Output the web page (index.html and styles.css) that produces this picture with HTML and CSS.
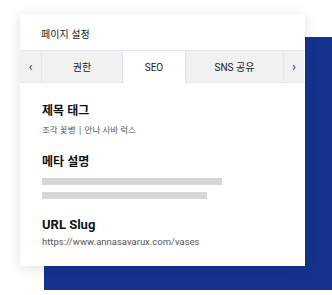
FILE: index.html
```html
<!DOCTYPE html>
<html lang="ko">
<head>
    <meta charset="UTF-8">
    <meta name="viewport" content="width=device-width, initial-scale=1.0">
    <title>페이지 설정</title>
    <link rel="stylesheet" href="styles.css">
</head>
<body>
    <div class="stage">
        <div class="backdrop"></div>

        <div class="settings-card">
            <div class="card-header">페이지 설정</div>

            <div class="tabs">
                <button class="tab-arrow">&#8249;</button>
                <button class="tab">권한</button>
                <button class="tab active">SEO</button>
                <button class="tab">SNS 공유</button>
                <button class="tab-arrow">&#8250;</button>
            </div>

            <div class="card-body">
                <div class="field">
                    <h2 class="field-title">제목 태그</h2>
                    <p class="field-value">조각 꽃병 | 안나 사바 럭스</p>
                </div>

                <div class="field">
                    <h2 class="field-title">메타 설명</h2>
                    <div class="placeholder-line" style="width: 180px;"></div>
                    <div class="placeholder-line" style="width: 165px;"></div>
                </div>

                <div class="field">
                    <h2 class="field-title latin">URL Slug</h2>
                    <p class="field-value latin">https://www.annasavarux.com/vases</p>
                </div>
            </div>
        </div>
    </div>
</body>
</html>
```

FILE: styles.css
```css
* {
    margin: 0;
    padding: 0;
    box-sizing: border-box;
}

body {
    font-family: "Noto Sans", "Noto Sans CJK KR", sans-serif;
    background: #ffffff;
    width: 332px;
    height: 295px;
    overflow: hidden;
}

.stage {
    position: relative;
    width: 332px;
    height: 295px;
    padding: 14px 0 0 20px;
}

/* blue panel sitting behind the card */
.backdrop {
    position: absolute;
    left: 44px;
    top: 37px;
    width: 300px;
    height: 253px;
    background: #14338c;
}

.settings-card {
    position: relative;
    width: 285px;
    height: 252px;
    background: #ffffff;
    box-shadow: 0 2px 12px rgba(0, 0, 0, 0.12);
}

.card-header {
    height: 36px;
    padding: 12px 0 0 21px;
    font-size: 10px;
    color: #222;
}

.tabs {
    display: flex;
    height: 33px;
    border-top: 1px solid #e3e6ec;
    border-bottom: 1px solid #e3e6ec;
}

.tabs button {
    font-family: "Roboto", "Noto Sans CJK KR", sans-serif;
    border: none;
    background: #f1f1f1;
    color: #222;
    font-size: 10px;
    cursor: pointer;
}

.tab-arrow {
    width: 22px;
    font-size: 12px !important;
    border-right: 1px solid #e3e6ec !important;
}

.tab-arrow:last-child {
    width: 21px;
    border-right: none !important;
    border-left: 1px solid #e3e6ec !important;
}

.tab {
    width: 81px;
    border-right: 1px solid #e3e6ec !important;
}

.tab:nth-child(4) {
    width: 97px;
    border-right: none !important;
}

.tab.active {
    width: 63px;
    background: #ffffff !important;
    margin-bottom: -1px;
}

.card-body {
    padding: 20px 22px 0;
}

.field {
    margin-bottom: 18px;
}

.field:last-child .field-title {
    margin-bottom: 3px;
}

.field-title {
    font-size: 12px;
    font-weight: bold;
    color: #111;
    line-height: 16px;
    margin-bottom: 5px;
}

.field-title.latin {
    font-family: "Roboto", sans-serif;
    font-size: 13px;
}

.field-value {
    font-size: 8.5px;
    color: #555;
    line-height: 12px;
}

.field-value.latin {
    font-family: "Roboto", sans-serif;
    font-size: 9.5px;
}

.placeholder-line {
    height: 7px;
    background: #d7d7d7;
    margin-top: 7px;
}

.placeholder-line:first-of-type {
    margin-top: 8px;
}
```
